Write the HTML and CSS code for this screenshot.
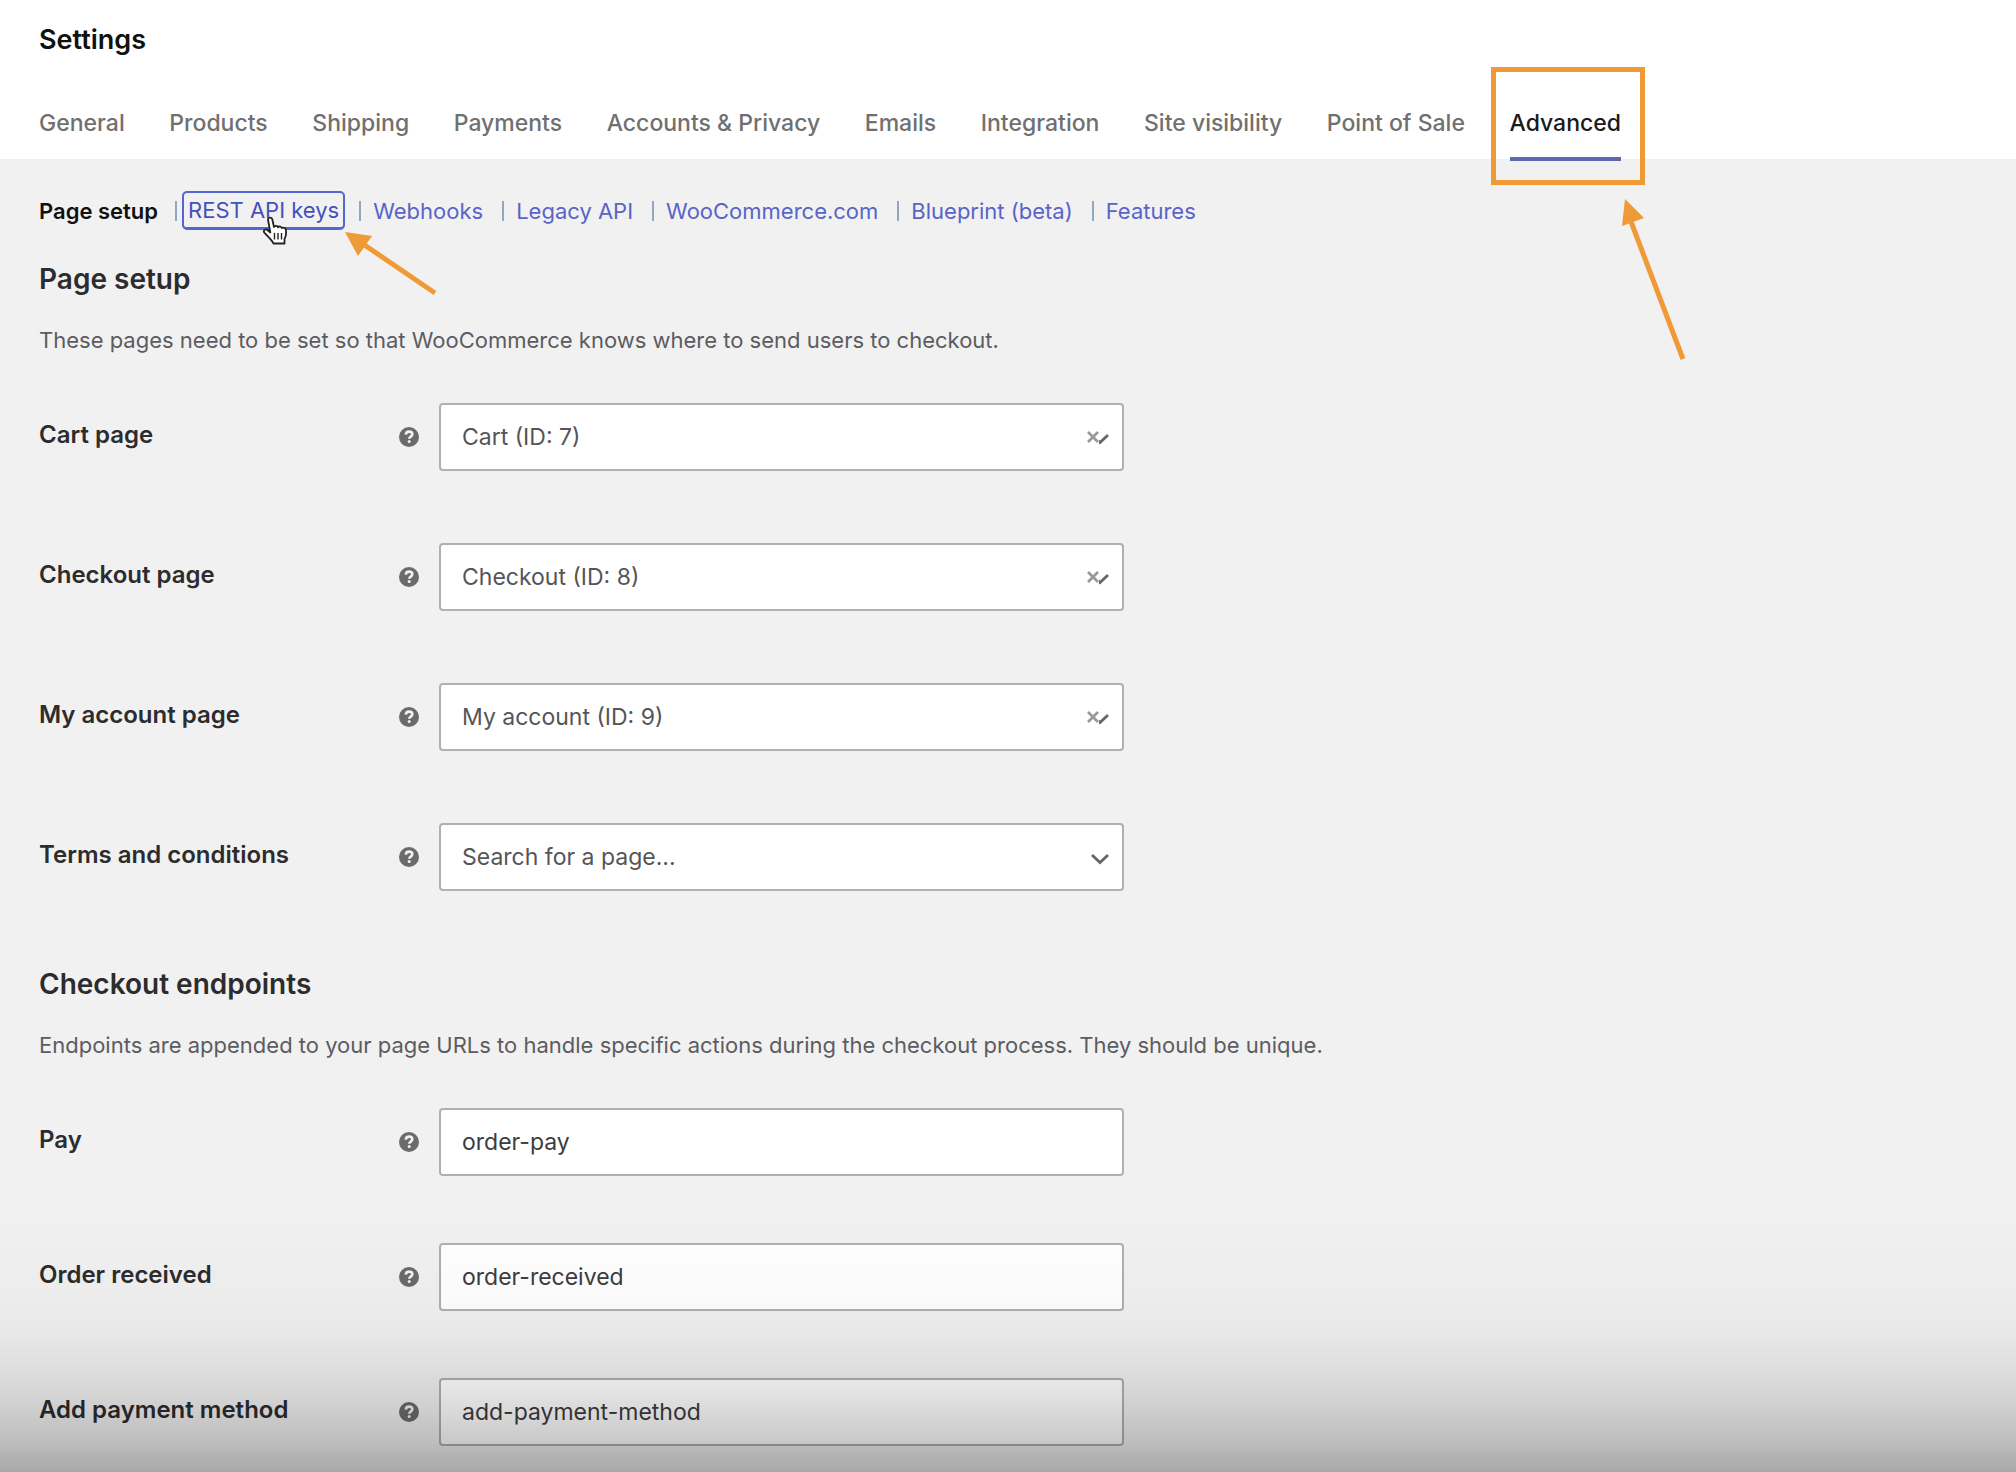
FILE: index.html
```html
<!DOCTYPE html>
<html lang="en">
<head>
    <meta charset="UTF-8">
    <meta name="viewport" content="width=device-width, initial-scale=1.0">
    <title>WooCommerce Settings - Advanced</title>
    <link rel="stylesheet" href="styles.css">
</head>
<body>
    <!-- shared icons -->
    <svg class="icon-defs" width="0" height="0" aria-hidden="true">
        <symbol id="icon-help" viewBox="0 0 20 20">
            <circle cx="10" cy="10" r="10" fill="#6b6b6b"/>
            <path d="M6.800 7.600C6.900 5.600 8.200 4.600 10.100 4.600c1.900 0 3.200 1 3.200 2.700 0 2.300-3 2.300-3 4.400" fill="none" stroke="#f1f1f1" stroke-width="2.600"/>
            <circle cx="10.200" cy="14.600" r="1.500" fill="#f1f1f1"/>
        </symbol>
        <symbol id="icon-chevron" viewBox="0 0 20 12">
            <path d="M2 2l8 7.500L18 2" fill="none" stroke="#666" stroke-width="2.800"/>
        </symbol>
        <symbol id="icon-clear" viewBox="0 0 12 12">
            <path d="M1 1l10 10M11 1L1 11" fill="none" stroke="#999" stroke-width="2.800"/>
        </symbol>
    </svg>

    <header class="header">
        <h1 class="header-title">Settings</h1>
        <nav class="tabs">
            <a href="#" class="tab">General</a>
            <a href="#" class="tab">Products</a>
            <a href="#" class="tab">Shipping</a>
            <a href="#" class="tab">Payments</a>
            <a href="#" class="tab">Accounts &amp; Privacy</a>
            <a href="#" class="tab">Emails</a>
            <a href="#" class="tab">Integration</a>
            <a href="#" class="tab">Site visibility</a>
            <a href="#" class="tab">Point of Sale</a>
            <div class="tab-marked">
                <a href="#" class="tab active">Advanced</a>
                <span class="highlight-box"></span>
                <svg class="arrow-tab" viewBox="0 0 70 170" aria-hidden="true">
                    <path d="M11 20L64 160" stroke="#f09a37" stroke-width="5"/>
                    <path d="M6 0L25 19L3 27Z" fill="#f09a37"/>
                </svg>
            </div>
        </nav>
    </header>

    <main class="content">
        <ul class="subnav">
            <li><a href="#" class="current">Page setup</a></li>
            <li class="subnav-marked">
                <a href="#" class="focused">REST API keys</a>
                <svg class="arrow-link" viewBox="0 0 100 70" aria-hidden="true">
                    <path d="M18 12L90 61" stroke="#f09a37" stroke-width="5"/>
                    <path d="M0 0L27 4L13 24Z" fill="#f09a37"/>
                </svg>
                <svg class="cursor" viewBox="0 0 26 30" aria-hidden="true">
                    <path d="M6 3.500C6 1 10 1 10.300 3.500L12 11c.5-1.600 3.600-1.500 4 .3.800-1.300 3.500-1 3.900.8 1.300-1 3.600-.3 4 1.700.5 3.500.2 6.500-1.400 9.200V27.500H11.500C9.500 23.500 5 20 2.300 16.500.8 14.300 3.500 12.500 5.500 14L8.300 16.500Z" fill="#fff" stroke="#222" stroke-width="1.800" stroke-linejoin="round"/>
                    <path d="M12.500 17v6.500M16 17v6.500M19.500 17v6.500" stroke="#222" stroke-width="1.400"/>
                </svg>
            </li>
            <li><a href="#">Webhooks</a></li>
            <li><a href="#">Legacy API</a></li>
            <li><a href="#">WooCommerce.com</a></li>
            <li><a href="#">Blueprint (beta)</a></li>
            <li><a href="#">Features</a></li>
        </ul>

        <section class="section">
            <h2>Page setup</h2>
            <p class="description">These pages need to be set so that WooCommerce knows where to send users to checkout.</p>
            <div class="fields fields-pages">
                <div class="field">
                    <label for="cart-page">Cart page</label>
                    <svg class="help" aria-hidden="true"><use href="#icon-help"/></svg>
                    <div class="select-wrap">
                        <select id="cart-page"><option>Cart (ID: 7)</option></select>
                        <svg class="chevron" aria-hidden="true"><use href="#icon-chevron"/></svg>
                        <button type="button" class="clear" aria-label="Clear"><svg><use href="#icon-clear"/></svg></button>
                    </div>
                </div>
                <div class="field">
                    <label for="checkout-page">Checkout page</label>
                    <svg class="help" aria-hidden="true"><use href="#icon-help"/></svg>
                    <div class="select-wrap">
                        <select id="checkout-page"><option>Checkout (ID: 8)</option></select>
                        <svg class="chevron" aria-hidden="true"><use href="#icon-chevron"/></svg>
                        <button type="button" class="clear" aria-label="Clear"><svg><use href="#icon-clear"/></svg></button>
                    </div>
                </div>
                <div class="field">
                    <label for="account-page">My account page</label>
                    <svg class="help" aria-hidden="true"><use href="#icon-help"/></svg>
                    <div class="select-wrap">
                        <select id="account-page"><option>My account (ID: 9)</option></select>
                        <svg class="chevron" aria-hidden="true"><use href="#icon-chevron"/></svg>
                        <button type="button" class="clear" aria-label="Clear"><svg><use href="#icon-clear"/></svg></button>
                    </div>
                </div>
                <div class="field">
                    <label for="terms-page">Terms and conditions</label>
                    <svg class="help" aria-hidden="true"><use href="#icon-help"/></svg>
                    <div class="select-wrap">
                        <select id="terms-page"><option>Search for a page...</option></select>
                        <svg class="chevron" aria-hidden="true"><use href="#icon-chevron"/></svg>
                    </div>
                </div>
            </div>
        </section>

        <section class="section">
            <h2>Checkout endpoints</h2>
            <p class="description">Endpoints are appended to your page URLs to handle specific actions during the checkout process. They should be unique.</p>
            <div class="fields">
                <div class="field">
                    <label for="pay">Pay</label>
                    <svg class="help" aria-hidden="true"><use href="#icon-help"/></svg>
                    <input type="text" id="pay" value="order-pay">
                </div>
                <div class="field">
                    <label for="order-received">Order received</label>
                    <svg class="help" aria-hidden="true"><use href="#icon-help"/></svg>
                    <input type="text" id="order-received" value="order-received">
                </div>
                <div class="field">
                    <label for="add-payment-method">Add payment method</label>
                    <svg class="help" aria-hidden="true"><use href="#icon-help"/></svg>
                    <input type="text" id="add-payment-method" value="add-payment-method">
                </div>
            </div>
        </section>
    </main>
    <div class="bottom-shade"></div>
</body>
</html>
```
FILE: styles.css
```css
* {
    box-sizing: border-box;
}
body {
    font-family: Inter, "Liberation Sans", sans-serif;
    background-color: #f1f1f1;
    color: #2c2c2e;
    margin: 0;
    min-height: 100vh;
}
a {
    text-decoration: none;
}
.icon-defs {
    position: absolute;
}
.header {
    background: white;
    padding: 24px 39px 0;
}
.header-title {
    font-size: 27px;
    line-height: 32px;
    font-weight: 600;
    color: #111;
    margin: 0 0 36px;
}
.tabs {
    display: flex;
    justify-content: space-between;
    max-width: 1582px;
    white-space: nowrap;
}
.tab {
    display: block;
    height: 67px;
    font-size: 23px;
    line-height: 62px;
    font-weight: 500;
    color: #707070;
}
.tab.active {
    color: #1a1a1a;
    height: 69px;
    margin-bottom: -2px;
    border-bottom: 4px solid #5b68b4;
}
.tab-marked {
    position: relative;
}
.highlight-box {
    position: absolute;
    top: -25px;
    left: -19px;
    right: -24px;
    bottom: -26px;
    border: 5px solid #f09a37;
    pointer-events: none;
}
.arrow-tab {
    position: absolute;
    top: 107px;
    left: 109px;
    width: 70px;
    height: 170px;
    pointer-events: none;
}

.content {
    padding: 32px 39px 24px;
}
.subnav {
    display: flex;
    align-items: center;
    list-style: none;
    margin: 0;
    padding: 0;
    font-size: 22px;
    line-height: 30px;
}
.subnav li {
    display: flex;
    align-items: center;
}
.subnav li + li::before {
    content: "";
    width: 2px;
    height: 20px;
    background: #8fa9c2;
    margin: 0 12px 0 19px;
}
.subnav a {
    color: #5864c8;
    padding: 4px 0;
}
.subnav .current {
    color: #111;
    font-weight: 600;
}
.subnav-marked {
    position: relative;
}
.subnav li + .subnav-marked::before {
    margin: 0 5px 0 17px;
}
.subnav .focused {
    color: #4450bd;
    padding: 2px 4px;
    border: 2px solid #5566cf;
    border-bottom-width: 3px;
    border-radius: 5px;
    margin-right: -5px;
}
.arrow-link {
    position: absolute;
    top: 41px;
    left: 100%;
    width: 100px;
    height: 70px;
    margin-left: 5px;
    pointer-events: none;
}
.cursor {
    position: absolute;
    top: 25px;
    left: 104px;
    width: 26px;
    height: 30px;
}

.section {
    margin-top: 31px;
}
.section + .section {
    margin-top: 75px;
}
h2 {
    font-size: 28px;
    line-height: 36px;
    font-weight: 600;
    margin: 0;
}
.description {
    font-size: 22px;
    line-height: 30px;
    color: #5c5c60;
    margin: 28px 0 48px;
}
.fields {
    display: flex;
    flex-direction: column;
    gap: 67px;
}
.fields-pages {
    gap: 72px;
}
.field {
    display: grid;
    grid-template-columns: 360px 20px minmax(0, 685px);
    align-items: center;
}
.field label {
    font-size: 24px;
    line-height: 30px;
    font-weight: 600;
    padding-bottom: 4px;
}
.help {
    width: 20px;
    height: 20px;
}
.field input,
.field select {
    display: block;
    width: 100%;
    height: 68px;
    padding: 0 21px;
    font-family: inherit;
    font-size: 23px;
    color: #3c3c40;
    background: white;
    border: 2px solid #aeb0b2;
    border-radius: 4px;
}
.field input {
    margin-left: 20px;
}
.select-wrap {
    position: relative;
    margin-left: 20px;
    margin-right: -20px;
}
.field select {
    appearance: none;
    color: #555558;
}
.chevron {
    position: absolute;
    right: 14px;
    top: 30px;
    width: 20px;
    height: 12px;
    pointer-events: none;
}
.clear {
    position: absolute;
    right: 25px;
    top: 28px;
    width: 12px;
    height: 12px;
    padding: 0;
    border: none;
    background: white;
}
.clear svg {
    display: block;
    width: 12px;
    height: 12px;
}
.bottom-shade {
    position: fixed;
    left: 0;
    right: 0;
    bottom: 0;
    height: 272px;
    background: linear-gradient(rgba(0, 0, 0, 0), rgba(0, 0, 0, 0.02) 37%, rgba(0, 0, 0, 0.035) 48%, rgba(0, 0, 0, 0.07) 60%, rgba(0, 0, 0, 0.12) 73%, rgba(0, 0, 0, 0.21) 89%, rgba(0, 0, 0, 0.3));
    pointer-events: none;
}
```
